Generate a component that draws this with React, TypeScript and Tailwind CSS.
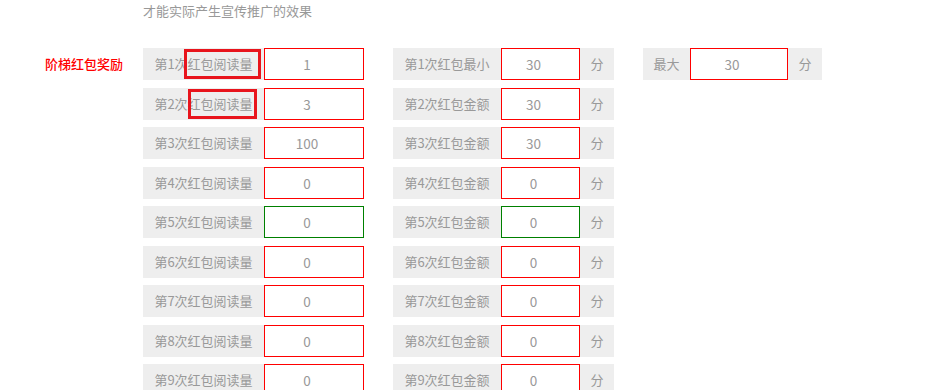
import React from "react";

const rows = [1, 2, 3, 4, 5, 6, 7, 8, 9];
const reads = ["1", "3", "100", "0", "0", "0", "0", "0", "0"];
const amounts = ["30", "30", "30", "0", "0", "0", "0", "0", "0"];

function Box({ value, width, ok }: { value: string; width: string; ok?: boolean }) {
  return (
    <input
      readOnly
      value={value}
      className={`${width} h-[32px] border pr-[14px] text-center text-[13.5px] text-[#999] bg-white outline-none ${
        ok ? "border-[#008000]" : "border-[#ff0000]"
      }`}
    />
  );
}

export default function App() {
  return (
    <div
      className="w-[942px] h-[390px] overflow-hidden bg-white text-[13px] text-[#999]"
      style={{ fontFamily: '"Noto Sans CJK SC", "Liberation Sans", sans-serif' }}
    >
      <div className="pl-[143px] pt-[1px] h-[48px] leading-[20px]">才能实际产生宣传推广的效果</div>

      <div className="flex">
        <div className="w-[143px] shrink-0 pr-[20px] text-right text-[#ff0000] font-medium leading-[32px]">
          阶梯红包奖励
        </div>

        <div className="flex flex-col">
          {rows.map((n, i) => (
            <div key={n} className="flex h-[32px] mb-[7.5px]">
              {/* 阅读量 */}
              <div className="relative flex">
                <div className="w-[121px] h-[32px] bg-[#eee] flex items-center justify-center">
                  第{n}次红包阅读量
                </div>
                <Box value={reads[i]} width="w-[100px]" ok={n === 5} />
                {n === 1 && (
                  <div className="absolute left-[41px] top-[1px] w-[77px] h-[30px] border-[3px] border-[#e8141c]" />
                )}
                {n === 2 && (
                  <div className="absolute left-[45px] top-[1px] w-[69px] h-[30px] border-[3px] border-[#e8141c]" />
                )}
              </div>

              {/* 金额 */}
              <div className="flex ml-[29px]">
                <div className="w-[108px] h-[32px] bg-[#eee] flex items-center justify-center">
                  {n === 1 ? "第1次红包最小" : `第${n}次红包金额`}
                </div>
                <Box value={amounts[i]} width="w-[79px]" ok={n === 5} />
                <div className="w-[34px] h-[32px] bg-[#eee] flex items-center justify-center">分</div>
              </div>

              {n === 1 && (
                <div className="flex ml-[29px]">
                  <div className="w-[47px] h-[32px] bg-[#eee] flex items-center justify-center">最大</div>
                  <Box value="30" width="w-[98px]" />
                  <div className="w-[34px] h-[32px] bg-[#eee] flex items-center justify-center">分</div>
                </div>
              )}
            </div>
          ))}
        </div>
      </div>
    </div>
  );
}
